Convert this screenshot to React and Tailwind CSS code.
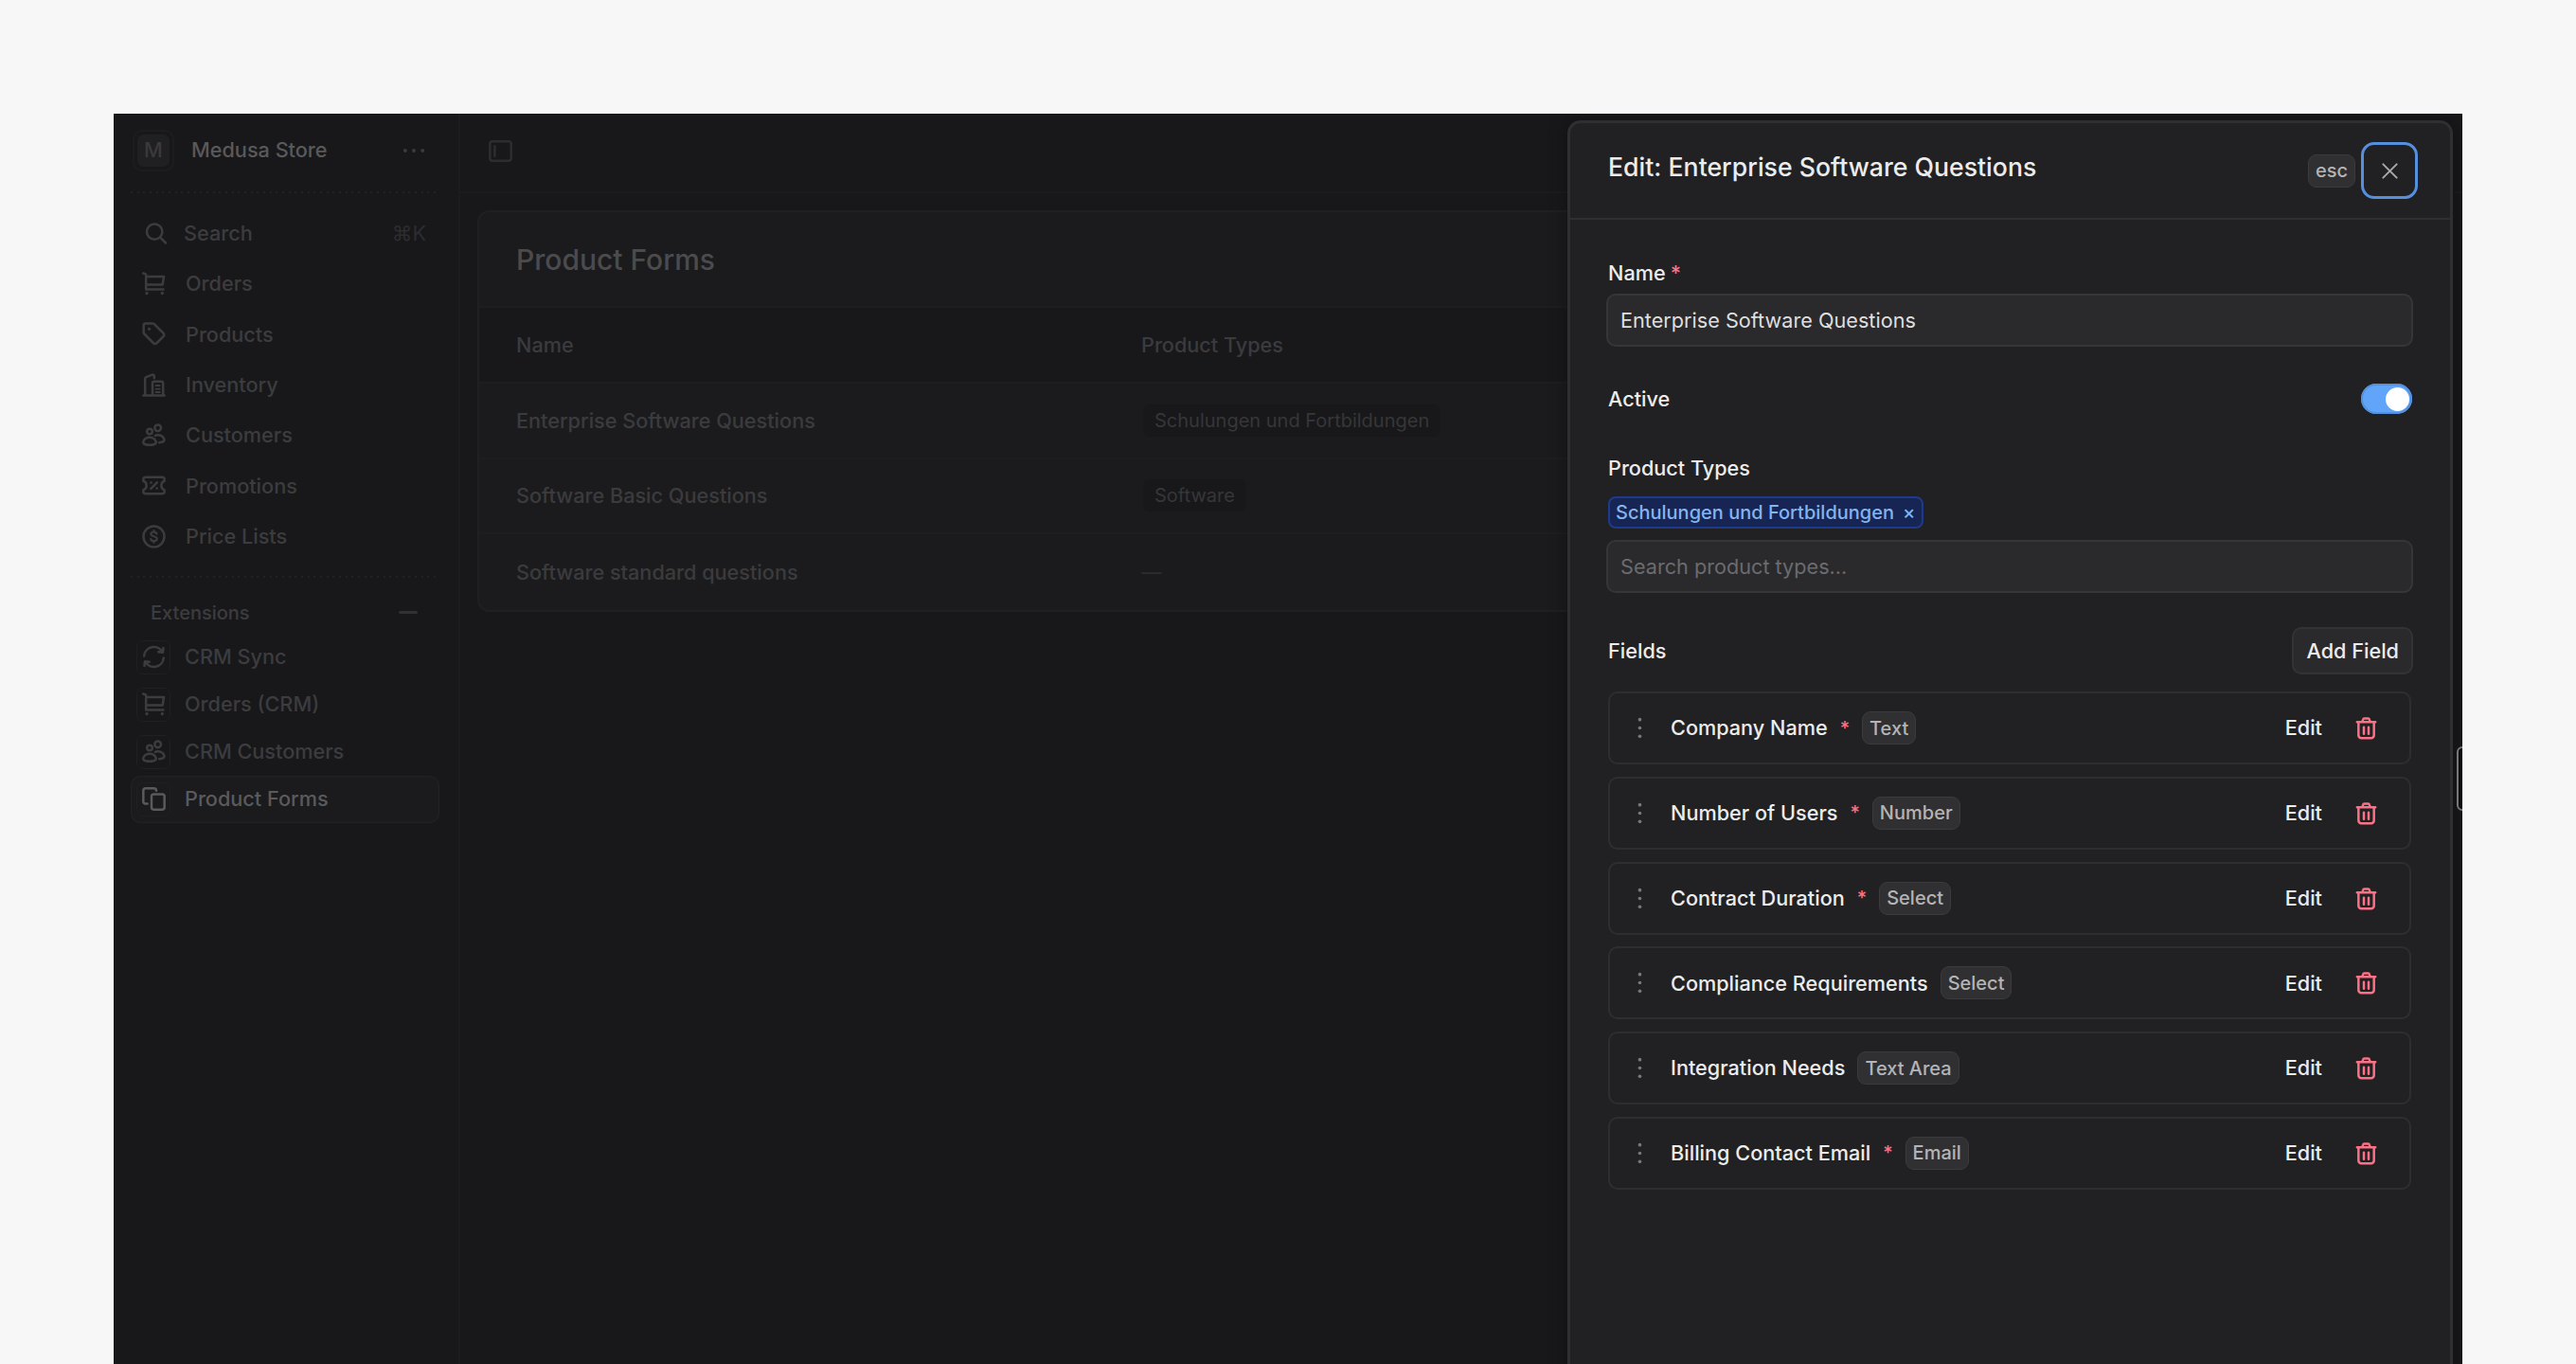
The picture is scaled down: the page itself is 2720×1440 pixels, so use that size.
import { useState } from 'react';
import clsx from 'clsx';

function Icon({ size = 25, stroke = 1.5, className, children }) {
  return (
    <svg
      width={size}
      height={size}
      viewBox="0 0 15 15"
      fill="none"
      stroke="currentColor"
      strokeWidth={stroke}
      strokeLinecap="round"
      strokeLinejoin="round"
      className={clsx('shrink-0', className)}
    >
      {children}
    </svg>
  );
}

const SearchIcon = () => (
  <Icon>
    <circle cx="6.7" cy="6.4" r="4.9" />
    <path d="m10.3 10 3.5 3.5" />
  </Icon>
);

const CartIcon = () => (
  <Icon>
    <path d="M.8.9l1.2.4c.3.1.5.4.5.7v9.1h11" />
    <path d="M2.5 3h11.3l-.8 5.1H2.5" />
    <path d="M3 13.4v.2M12.8 13.4v.2" strokeWidth="1.9" />
  </Icon>
);

const TagIcon = () => (
  <Icon>
    <path d="M1 2v4.4c0 .4.2.8.4 1.1l5.7 5.7c.7.7 1.7.7 2.3 0l4-4c.6-.6.6-1.6 0-2.3L7.7 1.3C7.4 1 7 .9 6.6.9H2.1C1.5.9 1 1.4 1 2Z" />
    <circle cx="4.5" cy="4.4" r=".95" fill="currentColor" stroke="none" />
  </Icon>
);

const BuildingsIcon = () => (
  <Icon>
    <path d="M.8 14.1h13.4M1.9 14V3.5c0-.4.3-.8.7-1L6.4 1c.6-.2 1.3.2 1.3.9v1.2M6.6 14V6.3c0-.6.4-1 1-1h4.7c.6 0 1 .4 1 1V14" />
    <path d="M8.7 7.8h2.5M8.7 10h2.5M8.7 12h2.5" strokeWidth="1.1" />
  </Icon>
);

const UsersIcon = () => (
  <Icon>
    <circle cx="4.8" cy="5.1" r="1.7" />
    <circle cx="10" cy="2.9" r="2" />
    <path d="M4.8 8.9C2.9 8.9 1.5 9.9.9 11.2c-.4.9 0 1.7.9 2 .8.3 1.8.5 3 .5s2.200-.2 3-.5c.9-.3 1.3-1.1.9-2-.6-1.3-2-2.3-3.9-2.3ZM8.3 7.7c.5-.2 1.1-.3 1.7-.3 1.9 0 3.3 1 3.9 2.300.4.9 0 1.7-.9 2-.6.2-1.3.4-2.1.5" />
  </Icon>
);

const PercentIcon = () => (
  <Icon>
    <path d="M.8 4.4V3.7c0-.9.7-1.5 1.5-1.5h10.4c.8 0 1.5.6 1.5 1.5v.7M.8 10.6v.7c0 .9.7 1.5 1.5 1.5h10.4c.8 0 1.5-.6 1.5-1.5v-.7M.8 4.7c1.2.3 2 1.5 2 2.8s-.8 2.5-2 2.8M14.2 4.7c-1.2.3-2 1.5-2 2.8s.8 2.5 2 2.8M5.6 9.5l3.9-3.9" />
    <circle cx="5.7" cy="5.7" r=".8" fill="currentColor" stroke="none" />
    <circle cx="9.4" cy="9.3" r=".8" fill="currentColor" stroke="none" />
  </Icon>
);

const DollarIcon = () => (
  <Icon>
    <circle cx="7.5" cy="7.5" r="6.6" />
    <path d="M9.3 5.8c-.2-.8-1-1.2-1.9-1.2-1 0-1.8.5-1.8 1.3 0 1.9 3.9.9 3.9 3 0 .9-.9 1.4-2 1.4s-1.9-.5-2-1.3M7.5 3.7v.9M7.5 10.4v.9" strokeWidth="1.3" />
  </Icon>
);

const SyncIcon = () => (
  <Icon>
    <path d="M1.3 6.9a6.2 6.2 0 0 1 11.6-2.5M13.7 8.1A6.2 6.2 0 0 1 2.1 10.6M13.5 1.8l-.3 2.9-2.9-.4M1.5 13.2l.3-2.9 2.9.4" />
  </Icon>
);

const CopyIcon = () => (
  <Icon>
    <rect x="6" y="4.5" width="8.2" height="9.7" rx="1.4" />
    <path d="M3.4 10.5H2.2c-.8 0-1.4-.6-1.4-1.4V2.2C.8 1.4 1.4.8 2.2.8h5.4c.8 0 1.4.6 1.4 1.4" />
  </Icon>
);

const SidebarIcon = () => (
  <Icon>
    <rect x=".8" y="1.4" width="13.4" height="12.2" rx="1.6" />
    <path d="M3.8 4.4v6.2" />
  </Icon>
);

const TrashIcon = () => (
  <Icon>
    <path d="M1.7 3.8h11.6M5 3.7l.5-1.6c.1-.4.5-.6.8-.6h2.4c.4 0 .7.2.8.6L10 3.7M2.6 4v8.2c0 1 .8 1.8 1.8 1.8h6.2c1 0 1.8-.8 1.8-1.8V4M6 7v4.2M9 7v4.2" />
  </Icon>
);

const EllipsisIcon = ({ vertical, size = 25 }) => (
  <Icon size={size} className={vertical && 'rotate-90'}>
    <g fill="currentColor" stroke="none">
      <circle cx="2.2" cy="7.5" r="1.1" />
      <circle cx="7.5" cy="7.5" r="1.1" />
      <circle cx="12.8" cy="7.5" r="1.1" />
    </g>
  </Icon>
);

const NAV = [
  { label: 'Orders', icon: CartIcon },
  { label: 'Products', icon: TagIcon },
  { label: 'Inventory', icon: BuildingsIcon },
  { label: 'Customers', icon: UsersIcon },
  { label: 'Promotions', icon: PercentIcon },
  { label: 'Price Lists', icon: DollarIcon },
];

const EXTENSIONS = [
  { label: 'CRM Sync', icon: SyncIcon },
  { label: 'Orders (CRM)', icon: CartIcon },
  { label: 'CRM Customers', icon: UsersIcon },
  { label: 'Product Forms', icon: CopyIcon, active: true },
];

const FORMS = [
  { name: 'Enterprise Software Questions', type: 'Schulungen und Fortbildungen' },
  { name: 'Software Basic Questions', type: 'Software' },
  { name: 'Software standard questions', type: null },
];

const FIELDS = [
  { name: 'Company Name', required: true, type: 'Text' },
  { name: 'Number of Users', required: true, type: 'Number' },
  { name: 'Contract Duration', required: true, type: 'Select' },
  { name: 'Compliance Requirements', required: false, type: 'Select' },
  { name: 'Integration Needs', required: false, type: 'Text Area' },
  { name: 'Billing Contact Email', required: true, type: 'Email' },
];

function DottedDivider() {
  return (
    <div className="ml-[18px] mr-[22px] h-[2px] bg-[repeating-linear-gradient(90deg,#222224_0px,#222224_2px,transparent_2px,transparent_6.667px)]" />
  );
}

function Sidebar() {
  return (
    <aside className="w-[366px] shrink-0 border-r-2 border-[#1c1c1e] text-[#3c3c3f]">
      <div className="flex h-[82px] items-center pl-5 pr-[34px] pb-[5px]">
        <div className="flex size-11 items-center justify-center rounded-[10px] border-2 border-[#1d1d1f]">
          <div className="flex size-[34px] items-center justify-center rounded-[7px] bg-[#202022] text-[21.67px] text-[#3a3a3d]">M</div>
        </div>
        <span className="ml-[18px] flex-1 text-[21.67px] text-[#59595b]">Medusa Store</span>
        <EllipsisIcon size={26} />
      </div>
      <DottedDivider />

      <div className="flex h-[47px] mt-[19px] items-center pl-[32px] pr-[34px]">
        <SearchIcon />
        <span className="ml-[17px] flex-1 text-[21.67px]">Search</span>
        <span className="text-[21.67px] font-normal text-[#2d2d30]">⌘K</span>
      </div>
      <nav className="mt-[6px] flex flex-col gap-[6.33px]">
        {NAV.map(({ label, icon: NavIcon }) => (
          <div key={label} className="flex h-[47px] items-center pl-[30px]">
            <NavIcon />
            <span className="ml-[21px] text-[21.67px]">{label}</span>
          </div>
        ))}
      </nav>

      <div className="mt-[18px]">
        <DottedDivider />
      </div>
      <div className="mt-[13px] flex h-[48px] items-center justify-between pl-[39px] pr-[43px]">
        <span className="text-[20px]">Extensions</span>
        <span className="h-[3px] w-[20px] rounded-full bg-[#313134]" />
      </div>
      <nav className="ml-[18px] mr-[20px] mt-[-2px] flex flex-col">
        {EXTENSIONS.map(({ label, icon: NavIcon, active }) => (
          <div
            key={label}
            className={clsx(
              'flex h-[50px] items-center rounded-[10px] pl-[6px]',
              active && 'bg-[#1b1b1d] text-[#5a5a5c] shadow-[inset_0_0_0_1.5px_#212123]',
            )}
          >
            <div className="flex size-9 items-center justify-center rounded-[7px] border-[1.5px] border-[#202022]">
              <NavIcon />
            </div>
            <span className="ml-[15px] text-[21.67px]">{label}</span>
          </div>
        ))}
      </nav>
    </aside>
  );
}

function FormsTable() {
  return (
    <div className="mx-[18px] mt-[18px] overflow-hidden rounded-[13px] border-2 border-[#202022] bg-[#1b1b1d]">
      <div className="flex h-[101px] items-center border-b-2 border-[#1e1e20] px-[39px]">
        <h1 className="text-[30px] leading-none text-[#4b4b4d]">Product Forms</h1>
      </div>
      <div className="grid h-[80px] grid-cols-[660px_1fr] items-center border-b-2 border-[#1e1e20] bg-[#18181a] px-[39px] text-[21.67px] text-[#3b3b3e]">
        <span>Name</span>
        <span>Product Types</span>
      </div>
      {FORMS.map(({ name, type }) => (
        <div
          key={name}
          className="grid h-[79.6px] grid-cols-[660px_1fr] items-center border-b-2 border-[#1e1e20] px-[39px] text-[21.67px] text-[#3b3b3e] last:border-b-0"
        >
          <span>{name}</span>
          {type ? (
            <span className="ml-[2px] flex h-[34px] w-fit items-center rounded-[7px] bg-[#18181a] px-[12px] text-[20px] font-normal text-[#363639]">
              {type}
            </span>
          ) : (
            <span className="font-normal text-[#2d2d30]">—</span>
          )}
        </div>
      ))}
    </div>
  );
}

function Badge({ children }) {
  return (
    <span className="flex h-[35px] items-center rounded-[9px] border-[1.5px] border-[#3b3b3d] bg-[#303032] px-[7px] text-[20px] text-[#b4b4b6]">
      {children}
    </span>
  );
}

function FieldRow({ field }) {
  return (
    <div className="flex h-[77px] items-center rounded-[10px] border-2 border-[#2e2e30] pr-[33px] pl-[16px] text-[#ececed]">
      <span className="flex w-[30px] justify-center text-[#77777c]">
        <EllipsisIcon vertical />
      </span>
      <div className="ml-[18px] flex flex-1 items-center gap-[13px]">
        <span className="text-[21.67px]">{field.name}</span>
        {field.required && <span className="text-[20px] leading-none text-[#fb7185]">*</span>}
        <Badge>{field.type}</Badge>
      </div>
      <button className="text-[21.67px]">Edit</button>
      <button className="ml-[34px] text-[#fb7185]">
        <TrashIcon />
      </button>
    </div>
  );
}

function EditDrawer() {
  const [name, setName] = useState('Enterprise Software Questions');
  const [query, setQuery] = useState('');

  return (
    <div className="absolute top-[7px] right-[10px] h-[1400px] w-[935px] rounded-[14px] border-[3px] border-[#2f2f31] bg-[#212123] text-[#ececed] shadow-[0_0_20px_rgba(0,0,0,0.35)]">
      <header className="flex h-[102px] items-center border-b-2 border-[#2f2f31] pl-[40px] pr-[34px]">
        <h2 className="flex-1 pb-[8px] text-[26.67px] leading-none">Edit: Enterprise Software Questions</h2>
        <Badge>esc</Badge>
        <button className="ml-[6px] flex size-[60px] items-center justify-center rounded-[14px] border-[3px] border-[#5590dd] text-[#a8a8ac]">
          <Icon size={25} stroke={1.2}>
            <path d="m3.2 3.2 8.6 8.6M11.8 3.2l-8.6 8.6" />
          </Icon>
        </button>
      </header>

      <div className="pl-[38px] pr-[39px] text-[21.67px]">
        <label className="mt-[40px] flex h-[32px] items-center gap-[5px] pl-[2px]">
          Name <span className="text-[#fb7185]">*</span>
        </label>
        <input
          value={name}
          onChange={(e) => setName(e.target.value)}
          className="mt-[6px] block h-[56px] w-full rounded-[10px] border-2 border-[#363638] bg-[#2a2a2c] px-[13px] font-normal text-[#dededf] outline-none"
        />

        <div className="mt-[39px] flex h-[32px] items-center justify-between pl-[2px] pr-[1px]">
          Active
          <span className="flex h-[32px] w-[54px] items-center justify-end rounded-full bg-[#60a5fa] px-[3px] shadow-[inset_0_0_0_2px_#5590dd]">
            <span className="size-[25px] rounded-full bg-white" />
          </span>
        </div>

        <div className="mt-[41px] flex h-[32px] items-center pl-[2px]">Product Types</div>
        <div className="mt-[14px] ml-[2px] flex h-[34px] w-fit items-center rounded-[8px] border-2 border-[#1e3a8a] bg-[#172554] pr-[7px] pl-[6px] text-[20px] text-[#84b4f0]">
          Schulungen und Fortbildungen
          <span className="ml-[9px]">×</span>
        </div>
        <input
          value={query}
          onChange={(e) => setQuery(e.target.value)}
          placeholder="Search product types..."
          className="mt-[12px] block h-[56px] w-full rounded-[10px] border-2 border-[#363638] bg-[#2a2a2c] px-[13px] font-normal outline-none placeholder:text-[#6b6b70]"
        />

        <div className="mt-[36px] flex h-[50px] items-center justify-between pl-[2px]">
          Fields
          <button className="h-[50px] rounded-[10px] border-2 border-[#333335] bg-[#2a2a2c] px-[13px]">Add Field</button>
        </div>
        <div className="mt-[18px] flex flex-col gap-[12.8px] pl-[2px] pr-[2px]">
          {FIELDS.map((field) => (
            <FieldRow key={field.name} field={field} />
          ))}
        </div>
      </div>
    </div>
  );
}

export default function App() {
  return (
    <div className="h-[1440px] w-[2720px] overflow-hidden bg-[#f7f7f7] px-[120px] pt-[120px] font-['Inter',sans-serif] font-medium">
      <div className="relative flex h-[1320px] overflow-hidden bg-[#18181a]">
        <Sidebar />
        <main className="min-w-0 flex-1">
          <div className="flex h-[84px] items-center border-b-2 border-[#1c1c1e] pl-[30px] pb-[4px] text-[#2d2d30]">
            <SidebarIcon />
          </div>
          <FormsTable />
        </main>
        <EditDrawer />
        <div className="absolute top-[668px] -right-[20px] h-[68px] w-[26px] rounded-[6px] border-2 border-[#77777a] bg-[#0b0b0c]" />
      </div>
    </div>
  );
}
